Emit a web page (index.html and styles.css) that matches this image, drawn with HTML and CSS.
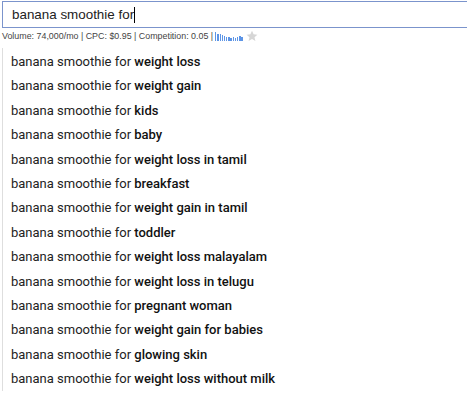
FILE: index.html
```html
<!DOCTYPE html>
<html>
<head>
<meta charset="utf-8">
<link rel="stylesheet" href="styles.css">
</head>
<body>
<div class="page">
  <div class="search">
    <span class="query">banana smoothie for</span><span class="caret"></span>
  </div>
  <div class="meta">
    <span>Volume: 74,000/mo | CPC: $0.95 | Competition: 0.05 |</span>
    <span class="spark">
      <i style="height:9px"></i><i style="height:7px"></i><i style="height:7px"></i><i style="height:6px"></i><i style="height:5px"></i><i style="height:4px"></i><i style="height:4px"></i><i style="height:3px"></i><i style="height:4px"></i><i style="height:3px"></i><i style="height:4px"></i><i style="height:5px"></i><i style="height:4px"></i>
    </span>
    <svg class="star" viewBox="0 0 24 24" width="12" height="12"><path d="M12 1.5l3.2 7.1 7.6.7-5.8 5.1 1.8 7.5L12 17.9l-6.8 4 1.8-7.5-5.8-5.1 7.6-.7z" fill="#d6d6d6"/></svg>
  </div>
  <ul class="list">
    <li>banana smoothie for <b>weight loss</b></li>
    <li>banana smoothie for <b>weight gain</b></li>
    <li>banana smoothie for <b>kids</b></li>
    <li>banana smoothie for <b>baby</b></li>
    <li>banana smoothie for <b>weight loss in tamil</b></li>
    <li>banana smoothie for <b>breakfast</b></li>
    <li>banana smoothie for <b>weight gain in tamil</b></li>
    <li>banana smoothie for <b>toddler</b></li>
    <li>banana smoothie for <b>weight loss malayalam</b></li>
    <li>banana smoothie for <b>weight loss in telugu</b></li>
    <li>banana smoothie for <b>pregnant woman</b></li>
    <li>banana smoothie for <b>weight gain for babies</b></li>
    <li>banana smoothie for <b>glowing skin</b></li>
    <li>banana smoothie for <b>weight loss without milk</b></li>
  </ul>
</div>
</body>
</html>
```
FILE: styles.css
```css
html, body {
  margin: 0;
  padding: 0;
  background: #fff;
}
.page {
  padding: 1px 0 0 2px;
  font-family: "Liberation Sans", Arial, sans-serif;
}
.search {
  height: 25px;
  border: 1px solid #7b94cc;
  border-right: none;
  display: flex;
  align-items: center;
  padding-left: 9px;
}
.query {
  font-family: "Liberation Sans", Arial, sans-serif;
  font-size: 13.4px;
  color: #222;
}
.caret {
  display: inline-block;
  width: 1px;
  height: 16px;
  background: #000;
}
.meta {
  display: flex;
  align-items: center;
  height: 12px;
  margin-top: 2px;
  font-size: 8.9px;
  color: #444;
}
.spark {
  display: flex;
  align-items: flex-end;
  gap: 0.9px;
  height: 10px;
  margin-left: 2px;
}
.spark i {
  display: block;
  width: 1.3px;
  background: #5d95e6;
}
.star {
  margin-left: 3px;
  margin-top: -1px;
}
.list {
  list-style: none;
  margin: 6px 0 0 0;
  padding: 2px 0 0 0;
  border-left: 1px solid #dedede;
}
.list li {
  height: 24.4px;
  line-height: 24.4px;
  padding-left: 8px;
  font-family: Roboto, "Liberation Sans", sans-serif;
  font-size: 13px;
  color: #222;
  white-space: nowrap;
}
.list b {
  font-weight: 500;
  color: #111;
}
```
